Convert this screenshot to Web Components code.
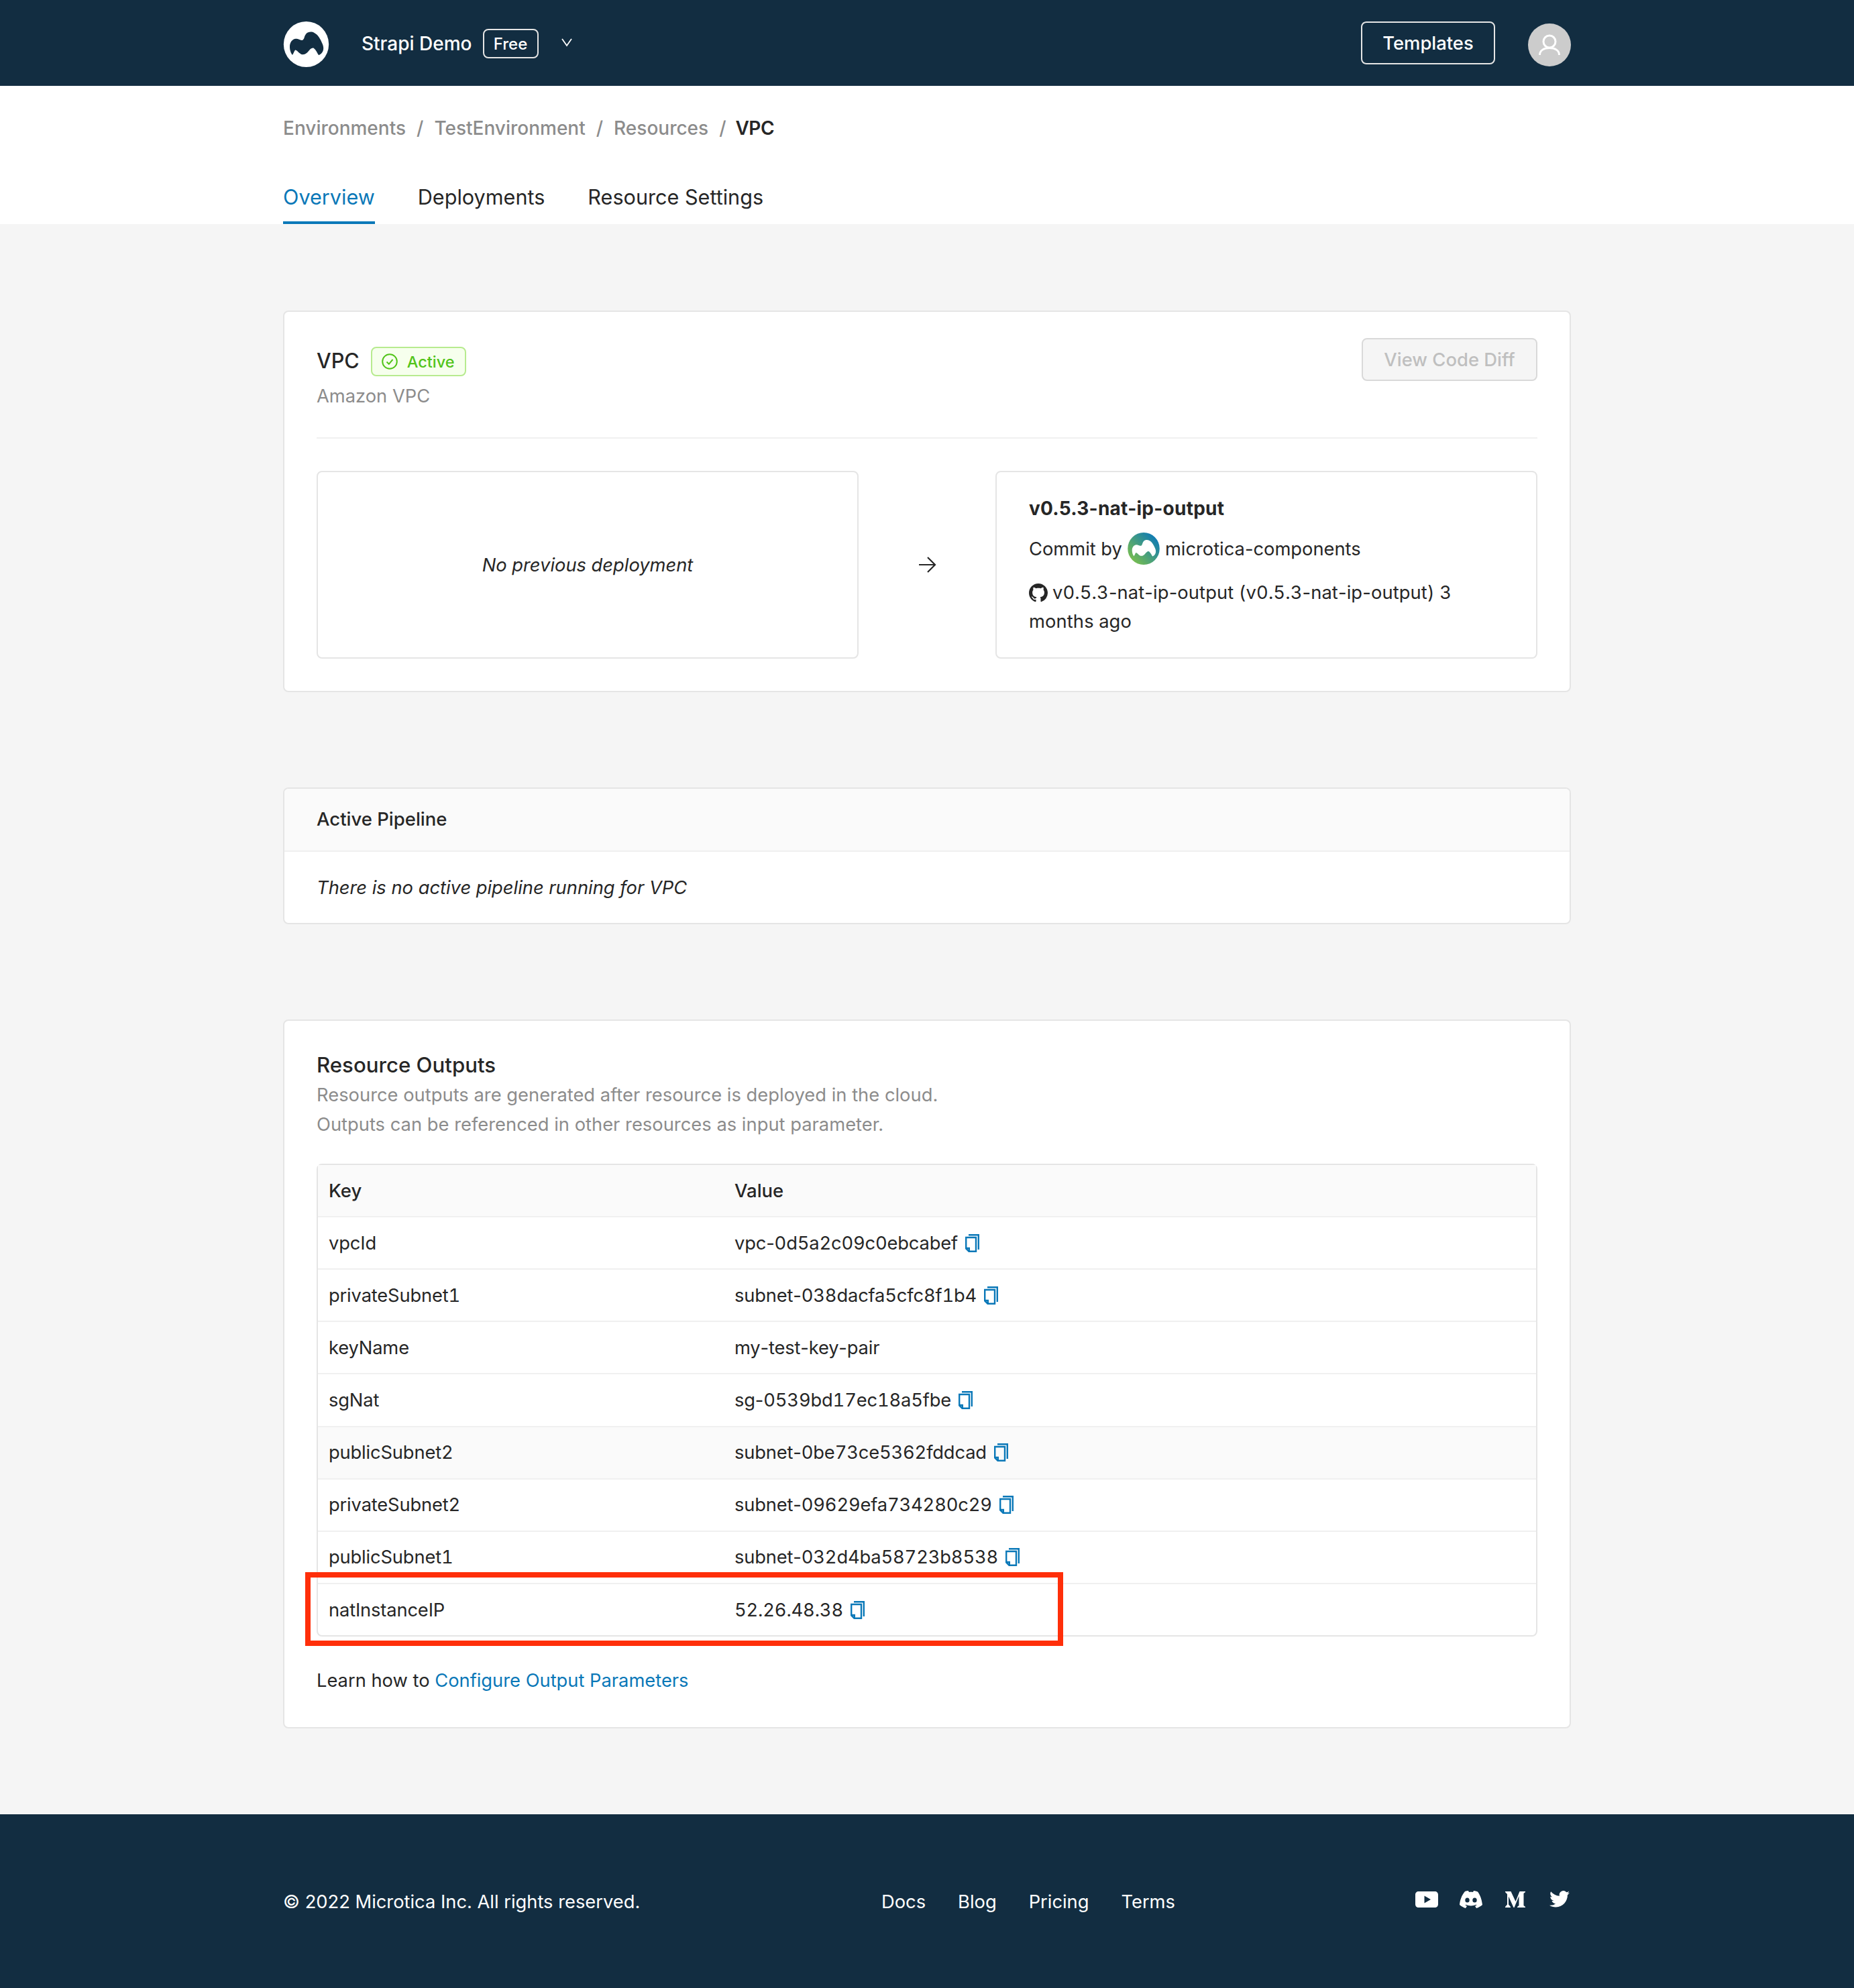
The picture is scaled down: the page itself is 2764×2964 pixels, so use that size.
<!DOCTYPE html>
<html><head><meta charset="utf-8">
<style>
html,body{margin:0;padding:0;background:#f5f5f5;font-family:Inter,"Liberation Sans",sans-serif;color:#262626;}
.h{font-feature-settings:normal}
</style></head><body>
<template id="t-top"><style>
:host{display:block;background:#122d41;height:128px;color:#fff}
.in{box-sizing:border-box;width:1920px;height:128px;margin-left:422px;display:flex;align-items:center}
.logo{width:69px;height:68px;flex:none;margin-right:48px;margin-top:4px;display:block}
.name{font-size:28px;font-weight:500;line-height:1;margin-top:1px}
.free{box-sizing:border-box;margin-left:16px;width:83px;height:44px;border:2px solid #e5e5e5;border-radius:8px;font-size:24px;font-weight:500;display:flex;align-items:center;justify-content:center;margin-top:2px}
.chev{width:18px;height:14px;margin-left:33px;margin-top:-3px;flex:none}
.sp{flex:1}
.btn{box-sizing:border-box;width:200px;height:64px;border:2px solid #e5e5e5;border-radius:8px;font-size:27.400px;font-weight:500;display:flex;align-items:center;justify-content:center;margin-top:0}
.av{width:64px;height:64px;margin-left:49px;margin-top:6px;flex:none;display:block}
</style><div class="in">
<svg class="logo" viewBox="22 20 206 208"><ellipse cx="125" cy="124" rx="103" ry="104" fill="#fff"/><path d="M50 135C50 115 62 100 78 99C90 98 100 110 110 104C118 98 115 88 125 76C133 67 150 65 162 72C178 80 190 100 197 118C203 130 207 145 200 158C195 168 188 172 182 174C176 165 170 150 160 142C150 138 142 148 135 156C125 168 112 175 100 168C90 162 82 150 75 150C70 155 68 165 62 173C55 165 50 150 50 135Z" fill="#122d41"/></svg>
<span class="name">Strapi Demo</span><span class="free">Free</span>
<svg class="chev" viewBox="0 0 18 14"><path d="M2 2L9 12L16 2" fill="none" stroke="#fff" stroke-width="1.800"/></svg>
<span class="sp"></span><span class="btn">Templates</span>
<svg class="av" viewBox="0 0 64 64"><circle cx="32" cy="32" r="32" fill="#ccc"/><circle cx="32" cy="27" r="9" fill="none" stroke="#fff" stroke-width="3"/><path d="M17.500 47C17.500 40 24 36.500 32 36.500C40 36.500 46.500 40 46.500 47" fill="none" stroke="#fff" stroke-width="3"/></svg>
</div></template>

<template id="t-sub"><style>
:host{display:block;background:#fff;height:206px}
.in{margin-left:422px;width:1920px;box-sizing:border-box}
.bc{font-size:28px;font-weight:500;color:#8c8c8c;line-height:34px;padding-top:46px;display:flex;gap:16px}
.bc b{color:#262626;font-weight:600;letter-spacing:-.5px;margin-left:-2px}
.tabs{display:flex;gap:64px;margin-top:66px}
.tab{font-size:30.600px;line-height:40px;padding-bottom:16px;height:40px;border-bottom:4px solid transparent}
.tab.on{color:#0a78b8;border-color:#0a78b8}
</style><div class="in">
<div class="bc"><span>Environments</span><span>/</span><span>TestEnvironment</span><span>/</span><span>Resources</span><span>/</span><b>VPC</b></div>
<div class="tabs"><span class="tab on">Overview</span><span class="tab">Deployments</span><span class="tab">Resource Settings</span></div>
</div></template>

<template id="t-card"><style>
:host{display:block;box-sizing:border-box;width:1920px;margin-left:422px;background:#fff;border:2px solid #e5e5e5;border-radius:8px;overflow:hidden}
</style><slot></slot></template>

<template id="t-overview"><style>
:host{display:block;padding:38px 48px 48px}
.head{display:flex;justify-content:space-between;height:151px;border-bottom:2px solid #f0f0f0;box-sizing:border-box}
.l{display:flex;align-items:center;height:44px;margin-top:14px}
.t{font-size:30.600px;font-weight:500;line-height:44px;margin-top:-3px}
.badge{box-sizing:border-box;margin-left:17px;width:142px;height:44px;border:2px solid #b7eb8f;border-radius:8px;background:#f6ffed;color:#52c41a;font-size:23.500px;font-weight:500;display:flex;align-items:center;padding-left:14px;gap:14px}
.badge svg{width:24px;height:24px}
.sub{font-size:27.300px;color:#8c8c8c;line-height:44px;margin-top:8px}
.btn{box-sizing:border-box;width:262px;height:64px;border:2px solid #d9d9d9;border-radius:8px;background:#f5f5f5;color:#bfbfbf;font-size:27.400px;font-weight:500;display:flex;align-items:center;justify-content:center;margin-top:1px}
.row{display:flex;margin-top:48px;align-items:stretch;justify-content:space-between}
.box{box-sizing:border-box;width:808px;height:280px;border:2px solid #e5e5e5;border-radius:8px}
.none{display:flex;align-items:center;justify-content:center;font-style:italic;font-size:27.300px}
.arrow{align-self:center;width:28px;height:26px}
.dep{padding:32px 48px 0;font-size:27.300px;line-height:43px}
.dep b{display:block;font-weight:700;line-height:44px;font-size:28px;letter-spacing:.25px}
.c{display:flex;align-items:center;height:48px;margin-top:14px;gap:8px}
.c svg{width:48px;height:48px}
.g{margin-top:20px;font-feature-settings:"tnum";letter-spacing:.13px}
.g i{font-style:normal;font-feature-settings:normal}
.g svg{width:28px;height:28px;vertical-align:-5px;margin-right:7px}
</style>
<div class="head"><div><div class="l"><span class="t">VPC</span><span class="badge"><svg viewBox="0 0 24 24"><circle cx="12" cy="12" r="10.800" fill="none" stroke="#52c41a" stroke-width="2"/><path d="M7.500 12.500L10.800 15.800L16.500 9" fill="none" stroke="#52c41a" stroke-width="2"/></svg>Active</span></div><div class="sub">Amazon VPC</div></div><span class="btn">View Code Diff</span></div>
<div class="row"><div class="box none">No previous deployment</div>
<svg class="arrow" viewBox="0 0 28 26"><path d="M2 13H25M15 2L26 13L15 24" fill="none" stroke="#262626" stroke-width="2.200"/></svg>
<div class="box dep"><b>v0.5.3-nat-ip-output</b>
<div class="c">Commit by <svg viewBox="22 20 206 208"><defs><linearGradient id="g" x1="0" y1="1" x2="1" y2="0"><stop offset=".1" stop-color="#7cc04b"/><stop offset=".9" stop-color="#0a78b8"/></linearGradient></defs><ellipse cx="125" cy="124" rx="103" ry="104" fill="url(#g)"/><path d="M50 135C50 115 62 100 78 99C90 98 100 110 110 104C118 98 115 88 125 76C133 67 150 65 162 72C178 80 190 100 197 118C203 130 207 145 200 158C195 168 188 172 182 174C176 165 170 150 160 142C150 138 142 148 135 156C125 168 112 175 100 168C90 162 82 150 75 150C70 155 68 165 62 173C55 165 50 150 50 135Z" fill="#fff"/></svg> microtica-components</div>
<div class="g"><svg viewBox="0 0 16 16"><path fill="#262626" d="M8 0C3.580 0 0 3.580 0 8c0 3.540 2.290 6.530 5.470 7.590.4.070.55-.17.55-.38 0-.19-.01-.82-.01-1.490-2.010.37-2.530-.49-2.690-.94-.09-.23-.48-.94-.82-1.130-.28-.15-.68-.52-.01-.53.630-.01 1.080.58 1.230.82.720 1.210 1.870.87 2.330.66.070-.52.280-.87.510-1.070-1.780-.2-3.640-.89-3.640-3.950 0-.87.310-1.590.820-2.150-.08-.2-.36-1.020.08-2.120 0 0 .67-.21 2.200.82.640-.18 1.320-.27 2-.27s1.360.09 2 .27c1.530-1.040 2.200-.82 2.200-.82.440 1.100.16 1.920.08 2.120.510.560.820 1.270.820 2.150 0 3.070-1.870 3.750-3.650 3.950.290.250.540.730.540 1.480 0 1.070-.01 1.930-.01 2.200 0 .210.150.460.550.380A8.010 8.010 0 0 0 16 8c0-4.420-3.580-8-8-8z"/></svg>v0.5.3<i>-</i>nat<i>-</i>ip<i>-</i>output (v0.5.3<i>-</i>nat<i>-</i>ip<i>-</i>output) 3<br>months ago</div>
</div></div></template>

<template id="t-pipe"><style>
:host{display:block}
.h{height:92px;background:#fafafa;border-bottom:2px solid #f0f0f0;display:flex;align-items:center;padding-left:48px;font-size:27.500px;font-weight:500}
.h span{margin-top:-2px}
.b{height:106px;display:flex;align-items:center;padding-left:48px;font-size:27.300px;font-style:italic}
</style><div class="h"><span>Active Pipeline</span></div><div class="b">There is no active pipeline running for VPC</div></template>

<template id="t-outputs"><style>
:host{display:block;padding:46px 48px 0;height:1053px;box-sizing:border-box}
h2{margin:0;font-size:31.200px;font-weight:500;line-height:40px}
p{margin:3px 0 0;font-size:27.350px;line-height:44px;color:#8c8c8c}
.tbl{position:relative;margin-top:36px;box-sizing:border-box;border:2px solid #e5e5e5;border-radius:8px;width:1820px}
.learn{font-size:27.300px;margin-top:44px;line-height:44px}
a{color:#0a78b8;text-decoration:none}
.red{position:absolute;left:-19px;top:607px;width:1130px;height:110px;box-sizing:border-box;border:8px solid #ff2f0a;pointer-events:none}
</style>
<h2>Resource Outputs</h2><p>Resource outputs are generated after resource is deployed in the cloud.<br>Outputs can be referenced in other resources as input parameter.</p>
<div class="tbl"><slot></slot><div class="red"></div></div>
<div class="learn">Learn how to <a>Configure Output Parameters</a></div></template>

<template id="t-row"><style>
:host{display:grid;grid-template-columns:621px 1fr;height:78.150px;box-sizing:border-box;border-top:2px solid #f0f0f0;align-items:center;font-size:27.300px;font-feature-settings:"tnum";letter-spacing:-.15px}
:host(:first-child){border-top:0;background:#fafafa;font-weight:500;height:76px;font-size:27.500px;letter-spacing:0}
:host([stripe]){background:#fafafa}
.k{padding-left:16px}
.v{display:flex;align-items:center;gap:11px}
svg{width:21px;height:27px;flex:none}
</style><div class="k"><slot name="k"></slot></div><div class="v"><slot name="v"></slot><span id="i"></span></div></template>

<template id="t-foot"><style>
:host{display:block;background:#122d41;height:259px;color:#fff;font-size:27.300px}
.in{margin-left:422px;width:1920px;height:259px;display:grid;grid-template-columns:892px 1fr auto;align-items:center}
.in>span,.links{margin-top:1px}
.links{display:flex;gap:48px}
.soc{display:flex;align-items:center;margin-top:-6px;margin-right:2px}
svg{display:block;fill:#fff}
</style><div class="in"><span>© 2022 Microtica Inc. All rights reserved.</span><div class="links"><span>Docs</span><span>Blog</span><span>Pricing</span><span>Terms</span></div>
<div class="soc">
<svg width="34" height="24" viewBox="0 0 34 24"><path fill-rule="evenodd" d="M5 0H29C32 0 34 2 34 5V19C34 22 32 24 29 24H5C2 24 0 22 0 19V5C0 2 2 0 5 0ZM13.500 6.500V17.500L23 12Z"/></svg>
<svg style="margin-left:32px" width="34" height="26" viewBox="0 0 34 26"><path fill-rule="evenodd" d="M8 1C10 .4 12 0 13 0L14 2C16 1.700 18 1.700 20 2L21 0C23 .2 25 .6 27 1.500C31 7 33 13 34 21C31 23.500 28 25 25 26L23 22.800L25.500 21.500L24.500 20.800C19 23 15 23 9.500 20.800L8.500 21.500L11 22.800L9 26C6 25 3 23.500 0 21C.5 14 3 7 8 1ZM11.500 10.500A3.200 3.500 0 1 0 11.500 17.500A3.200 3.500 0 1 0 11.500 10.500ZM22.500 10.500A3.200 3.500 0 1 0 22.500 17.500A3.200 3.500 0 1 0 22.500 10.500Z"/></svg>
<svg style="margin-left:34px" width="30" height="24" viewBox="0 0 30 24"><path d="M0 0H8.500L15.500 15L21.500 0H30V1L27.500 3V21L30 23V24H18V23L20.500 21V7L13.500 24H12.500L5 7.500V19.500L8 23V24H0V23L3 19.500V4L0 1Z"/></svg>
<svg style="margin-left:36px" width="30" height="25" viewBox="0 0 24 20"><path d="M24 2.400c-.9.400-1.800.7-2.800.8 1-.6 1.800-1.600 2.200-2.700-.9.600-2 1-3.100 1.200A4.900 4.900 0 0 0 11.900 6.100C7.800 5.900 4.200 4 1.700.9c-1.300 2.200-.7 5.100 1.500 6.600-.8 0-1.600-.2-2.200-.6 0 2.300 1.600 4.400 4 4.900-.7.200-1.500.2-2.200.1.600 2 2.500 3.400 4.600 3.400A9.900 9.900 0 0 1 0 17.300C2.200 18.700 4.900 19.500 7.500 19.500c9.100 0 14.300-7.700 14-14.600 1-.7 1.800-1.500 2.500-2.500z"/></svg>
</div></div></template>

<script>
function tpl(name,id,after){customElements.define(name,class extends HTMLElement{constructor(){super();const s=this.attachShadow({mode:'open'});s.appendChild(document.getElementById(id).content.cloneNode(true))}connectedCallback(){if(after)after(this.shadowRoot,this)}})}
const copy='<svg viewBox="0 0 21 27"><path fill="none" stroke="#0a78b8" stroke-width="2.400" d="M5 1.200H19.800V23M1.200 5H16V25.800H5.500L1.200 21.500ZM1.200 21L5.800 21V25.800"/></svg>';
tpl('app-top','t-top');tpl('app-sub','t-sub');tpl('app-card','t-card');tpl('app-overview','t-overview');tpl('app-pipe','t-pipe');tpl('app-outputs','t-outputs');tpl('app-foot','t-foot');
tpl('out-row','t-row',(s,h)=>{const i=s.getElementById('i');if(!i)return;if(h.hasAttribute('copy'))i.outerHTML=copy;else i.remove()});
</script>
<app-top></app-top><app-sub></app-sub>
<app-card style="margin-top:129px"><app-overview></app-overview></app-card>
<app-card style="margin-top:142px"><app-pipe></app-pipe></app-card>
<app-card style="margin-top:142px;margin-bottom:128px"><app-outputs>
<out-row><span slot="k">Key</span><span slot="v">Value</span></out-row>
<out-row copy><span slot="k">vpcId</span><span slot="v">vpc<span class="h">-</span>0d5a2c09c0ebcabef</span></out-row>
<out-row copy><span slot="k">privateSubnet1</span><span slot="v">subnet<span class="h">-</span>038dacfa5cfc8f1b4</span></out-row>
<out-row><span slot="k">keyName</span><span slot="v">my<span class="h">-</span>test<span class="h">-</span>key<span class="h">-</span>pair</span></out-row>
<out-row copy><span slot="k">sgNat</span><span slot="v">sg<span class="h">-</span>0539bd17ec18a5fbe</span></out-row>
<out-row copy stripe><span slot="k">publicSubnet2</span><span slot="v">subnet<span class="h">-</span>0be73ce5362fddcad</span></out-row>
<out-row copy><span slot="k">privateSubnet2</span><span slot="v">subnet<span class="h">-</span>09629efa734280c29</span></out-row>
<out-row copy><span slot="k">publicSubnet1</span><span slot="v">subnet<span class="h">-</span>032d4ba58723b8538</span></out-row>
<out-row copy><span slot="k">natInstanceIP</span><span slot="v">52.26.48.38</span></out-row>
</app-outputs></app-card>
<app-foot></app-foot>
</body></html>
